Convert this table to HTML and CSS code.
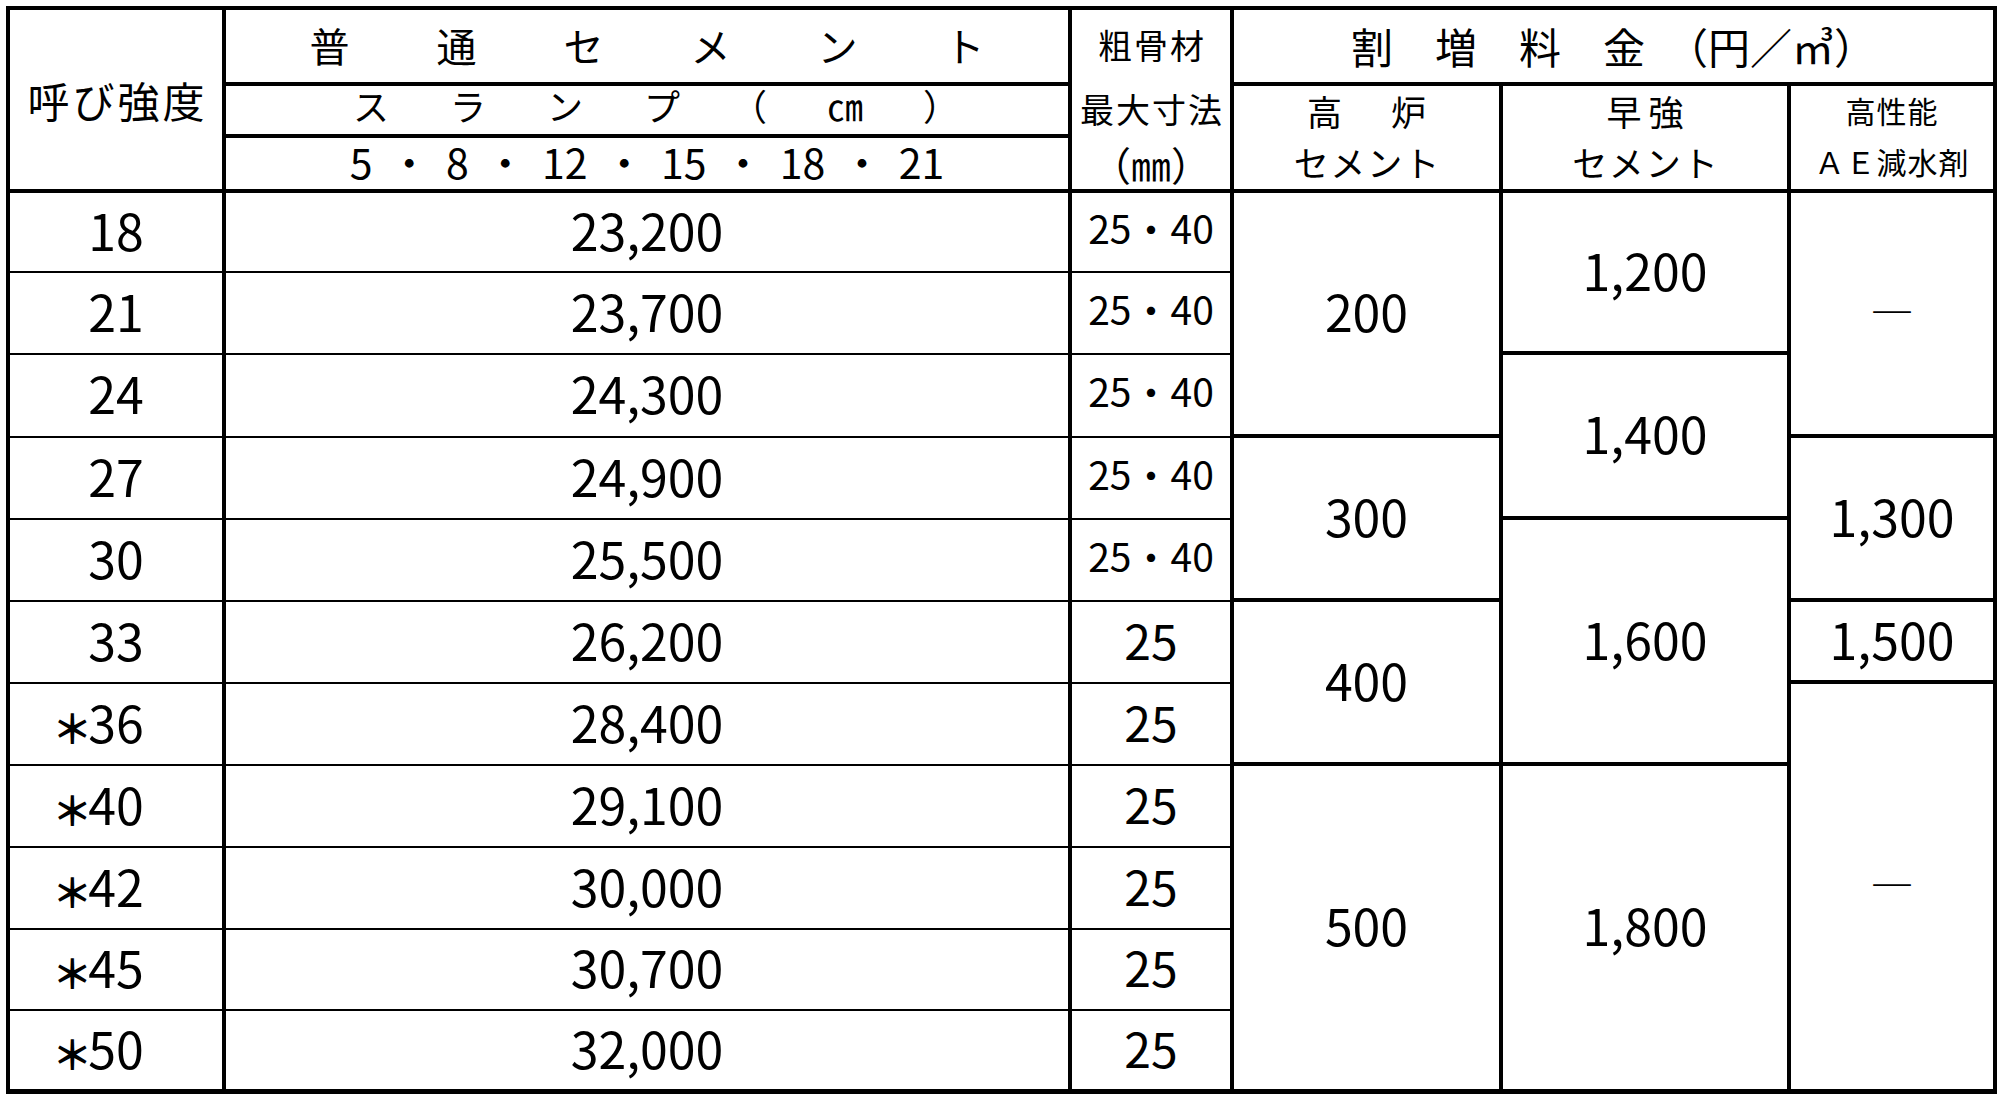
FILE: index.html
```html
<!DOCTYPE html>
<html lang="ja">
<head>
<meta charset="utf-8">
<title>レディーミクストコンクリート価格表</title>
<link rel="stylesheet" href="styles.css">
</head>
<body>
<div class="sheet">
  <div class="rate-table">
    <!-- header row 1 -->
    <div class="cell tb rs3 t-name"><span>呼び強度</span></div>
    <div class="cell tb t-main"><span>普</span><span>通</span><span>セ</span><span>メ</span><span>ン</span><span>ト</span></div>
    <div class="cell nb t-agg"><span>粗骨材</span></div>
    <div class="cell tb cs3 t-extra">割　増　料　金　（円／㎥）</div>
    <!-- header row 2 -->
    <div class="cell tb t-slump">
      <span class="grp g1"><span>ス</span><span>ラ</span><span>ン</span><span>プ</span></span>
      <span class="grp g2"><span>（</span><span>㎝</span><span>）</span></span>
    </div>
    <div class="cell nb t-agg"><span>最大寸法</span></div>
    <div class="cell tb rs2 stack t-kind"><span class="wide">高　炉</span><span class="kata">セメント</span></div>
    <div class="cell tb rs2 stack t-kind"><span class="wide">早強</span><span class="kata">セメント</span></div>
    <div class="cell tb rs2 stack t-kind small"><span>高性能</span><span>ＡＥ減水剤</span></div>
    <!-- header row 3 -->
    <div class="cell tb t-sizes">5 ・ 8 ・ 12 ・ 15 ・ 18 ・ 21</div>
    <div class="cell tb t-mm">（㎜）</div>

    <!-- data -->
    <div class="cell num">18</div>
    <div class="cell num">23,200</div>
    <div class="cell num mid">25・40</div>
    <div class="cell num tb rs3">200</div>
    <div class="cell num tb rs2">1,200</div>
    <div class="cell dash tb rs3">―</div>

    <div class="cell num">21</div>
    <div class="cell num">23,700</div>
    <div class="cell num mid">25・40</div>

    <div class="cell num">24</div>
    <div class="cell num">24,300</div>
    <div class="cell num mid">25・40</div>
    <div class="cell num tb rs2">1,400</div>

    <div class="cell num">27</div>
    <div class="cell num">24,900</div>
    <div class="cell num mid">25・40</div>
    <div class="cell num tb rs2">300</div>
    <div class="cell num tb rs2">1,300</div>

    <div class="cell num">30</div>
    <div class="cell num">25,500</div>
    <div class="cell num mid">25・40</div>
    <div class="cell num tb rs3">1,600</div>

    <div class="cell num">33</div>
    <div class="cell num">26,200</div>
    <div class="cell num agg">25</div>
    <div class="cell num tb rs2">400</div>
    <div class="cell num tb">1,500</div>

    <div class="cell num"><span class="ast">＊</span>36</div>
    <div class="cell num">28,400</div>
    <div class="cell num agg">25</div>
    <div class="cell dash last rs5">―</div>

    <div class="cell num"><span class="ast">＊</span>40</div>
    <div class="cell num">29,100</div>
    <div class="cell num agg">25</div>
    <div class="cell num last rs4">500</div>
    <div class="cell num last rs4">1,800</div>

    <div class="cell num"><span class="ast">＊</span>42</div>
    <div class="cell num">30,000</div>
    <div class="cell num agg">25</div>

    <div class="cell num"><span class="ast">＊</span>45</div>
    <div class="cell num">30,700</div>
    <div class="cell num agg">25</div>

    <div class="cell num last"><span class="ast">＊</span>50</div>
    <div class="cell num last">32,000</div>
    <div class="cell num agg last">25</div>
  </div>
</div>
</body>
</html>
```

FILE: styles.css
```css
html, body {
  margin: 0;
  background: #fff;
}

body {
  font-family: "Noto Sans CJK JP", "Noto Sans", sans-serif;
  color: #000;
}

.sheet {
  padding: 6px 0 0 6px;
}

.rate-table {
  display: grid;
  width: max-content;
  grid-template-columns: 216px 846px 162px 269px 288px 206px;
  grid-template-rows: 76px 52px 55px 80px 82px 83px 82px 82px 82px 82px 82px 82px 81px 83px;
  border-top: 4px solid #000;
  border-left: 4px solid #000;
}

.cell {
  display: flex;
  align-items: center;
  justify-content: center;
  min-width: 0;
  white-space: nowrap;
  line-height: 1;
  border-right: 4px solid #000;
  border-bottom: 2px solid #000;
}

/* border variants */
.tb { border-bottom-width: 4px; }
.nb { border-bottom-width: 0; }
.last { border-bottom-width: 5px; }

/* spans */
.rs2 { grid-row: span 2; }
.rs3 { grid-row: span 3; }
.rs4 { grid-row: span 4; }
.rs5 { grid-row: span 5; }
.cs3 { grid-column: span 3; }

/* header texts */
.t-name {
  font-size: 42px;
  letter-spacing: 3px;
}
.t-name span { margin-right: -3px; }

.t-main {
  font-size: 40px;
  gap: 87px;
  padding-bottom: 2px;
}

.t-slump {
  font-size: 36px;
  gap: 51px;
  padding-left: 18px;
  padding-bottom: 10px;
}
.grp { display: flex; }
.g1 { gap: 61px; }
.g2 { gap: 60px; }

.t-sizes {
  font-size: 41px;
  word-spacing: 7px;
  padding-bottom: 4px;
}

.t-agg {
  font-size: 34px;
  letter-spacing: 2px;
  padding-bottom: 6px;
}
.t-agg span { margin-right: -2px; }

.t-mm {
  font-size: 40px;
}

.t-extra {
  font-size: 42px;
}

.stack {
  flex-direction: column;
  line-height: 51px;
  padding-bottom: 4px;
}

.t-kind {
  font-size: 35px;
}
.t-kind .wide { letter-spacing: 7px; margin-right: -7px; }
.t-kind .kata { letter-spacing: 2px; margin-right: -2px; }
.t-kind.small {
  font-size: 30px;
  letter-spacing: 1px;
}

/* data */
.num {
  font-size: 50px;
  padding-bottom: 7px;
}
.num.mid {
  font-size: 39px;
  padding-bottom: 10px;
}
.num.agg {
  font-size: 48px;
}

.dash {
  font-size: 44px;
  padding-bottom: 8px;
}

.ast {
  display: inline-flex;
  justify-content: flex-end;
  width: 0;
  margin-top: 12px;
  font-size: 40px;
  font-weight: 700;
  letter-spacing: -4px;
}
```
